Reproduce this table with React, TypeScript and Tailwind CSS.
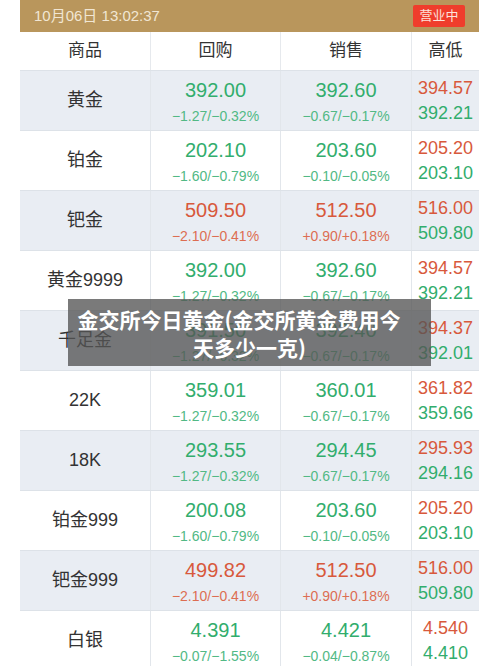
import React from "react";

type Row = {
  name: string;
  buy: string;
  buyChg: string;
  sell: string;
  sellChg: string;
  hi: string;
  lo: string;
  up?: boolean;
};

const rows: Row[] = [
  { name: "黄金", buy: "392.00", buyChg: "−1.27/−0.32%", sell: "392.60", sellChg: "−0.67/−0.17%", hi: "394.57", lo: "392.21" },
  { name: "铂金", buy: "202.10", buyChg: "−1.60/−0.79%", sell: "203.60", sellChg: "−0.10/−0.05%", hi: "205.20", lo: "203.10" },
  { name: "钯金", buy: "509.50", buyChg: "−2.10/−0.41%", sell: "512.50", sellChg: "+0.90/+0.18%", hi: "516.00", lo: "509.80", up: true },
  { name: "黄金9999", buy: "392.00", buyChg: "−1.27/−0.32%", sell: "392.60", sellChg: "−0.67/−0.17%", hi: "394.57", lo: "392.21" },
  { name: "千足金", buy: "391.50", buyChg: "−1.27/−0.32%", sell: "392.40", sellChg: "−0.67/−0.17%", hi: "394.37", lo: "392.01" },
  { name: "22K", buy: "359.01", buyChg: "−1.27/−0.32%", sell: "360.01", sellChg: "−0.67/−0.17%", hi: "361.82", lo: "359.66" },
  { name: "18K", buy: "293.55", buyChg: "−1.27/−0.32%", sell: "294.45", sellChg: "−0.67/−0.17%", hi: "295.93", lo: "294.16" },
  { name: "铂金999", buy: "200.08", buyChg: "−1.60/−0.79%", sell: "203.60", sellChg: "−0.10/−0.05%", hi: "205.20", lo: "203.10" },
  { name: "钯金999", buy: "499.82", buyChg: "−2.10/−0.41%", sell: "512.50", sellChg: "+0.90/+0.18%", hi: "516.00", lo: "509.80", up: true },
  { name: "白银", buy: "4.391", buyChg: "−0.07/−1.55%", sell: "4.421", sellChg: "−0.04/−0.87%", hi: "4.540", lo: "4.410" },
];

const font = { fontFamily: '"Liberation Sans", "Noto Sans CJK SC", sans-serif' };

export default function App() {
  return (
    <div className="relative w-[500px] h-[666px] overflow-hidden bg-white" style={font}>
      <div className="mx-[20px] w-[459px]">
        <div className="h-[32px] bg-[#b9965c] flex items-center justify-between pl-[14px] pr-[14px]">
          <span className="text-[15px] text-[#f1e6d3]">10月06日 13:02:37</span>
          <span className="bg-[#ef3d2c] text-[#fde3dc] text-[13px] h-[22px] w-[52px] flex items-center justify-center rounded-[2px]">营业中</span>
        </div>
        <div className="grid grid-cols-[130px_130px_131px_68px] h-[38px] bg-white text-[17px] text-[#333]">
          <div className="flex items-center justify-center">商品</div>
          <div className="flex items-center justify-center border-l border-[#e6e9ed]">回购</div>
          <div className="flex items-center justify-center border-l border-[#e6e9ed]">销售</div>
          <div className="flex items-center justify-center border-l border-[#e6e9ed]">高低</div>
        </div>
        {rows.map((r, i) => {
          const bg = i % 2 === 0 ? "bg-[#e9edf3]" : "bg-white";
          const main = r.up ? "text-[#d8593c]" : "text-[#32ad6d]";
          const sub = r.up ? "text-[#dd6d52]" : "text-[#52b985]";
          return (
            <div key={i} className={`grid grid-cols-[130px_130px_131px_68px] h-[60px] border-t border-[#dde2e8] ${bg}`}>
              <div className="flex items-center justify-center text-[18px] text-[#333]">{r.name}</div>
              <div className="flex flex-col items-center border-l border-[#e2e6eb]">
                <div className={`text-[20px] leading-[24px] mt-[7px] ${main}`}>{r.buy}</div>
                <div className={`text-[14px] leading-[16px] mt-[6px] ${sub}`}>{r.buyChg}</div>
              </div>
              <div className="flex flex-col items-center border-l border-[#e2e6eb]">
                <div className={`text-[20px] leading-[24px] mt-[7px] ${main}`}>{r.sell}</div>
                <div className={`text-[14px] leading-[16px] mt-[6px] ${sub}`}>{r.sellChg}</div>
              </div>
              <div className="flex flex-col items-center border-l border-[#e2e6eb]">
                <div className="text-[18px] leading-[22px] mt-[6px] text-[#d8593c]">{r.hi}</div>
                <div className="text-[18px] leading-[22px] mt-[3px] text-[#32ad6d]">{r.lo}</div>
              </div>
            </div>
          );
        })}
      </div>
      <div
        className="absolute left-[68px] top-[299px] w-[363px] h-[67px] bg-[rgba(85,85,85,0.78)] flex flex-col items-center justify-center text-white font-bold text-[21px] leading-[28px]"
        style={{ fontFamily: '"Noto Sans CJK SC", "Liberation Sans", sans-serif' }}
      >
        <div className="pr-[21px] whitespace-nowrap">金交所今日黄金(金交所黄金费用今</div>
        <div>天多少一克)</div>
      </div>
    </div>
  );
}
